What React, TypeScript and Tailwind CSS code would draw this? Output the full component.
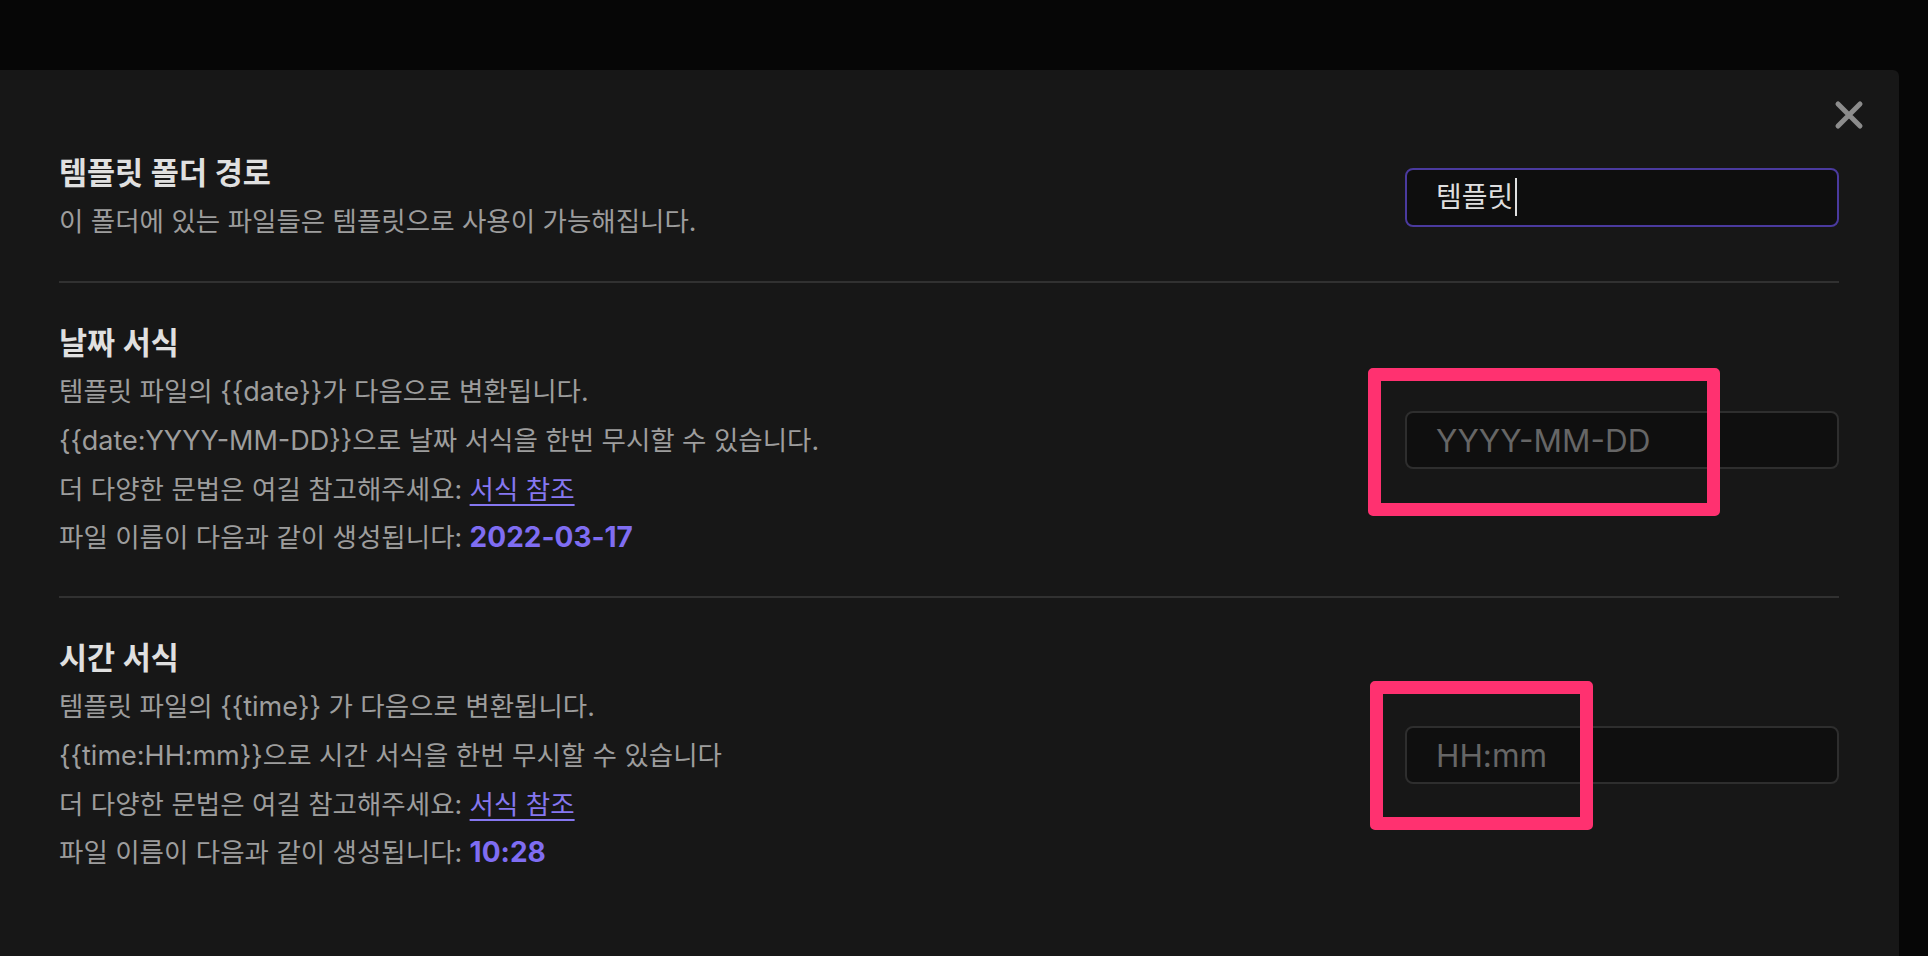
import type { ReactNode } from 'react';

const FONT = "font-['Inter','Noto_Sans_CJK_KR',sans-serif]";

function Code({ children }: { children: ReactNode }) {
  return <span className="text-[27px]">{children}</span>;
}

function Pop({ children }: { children: ReactNode }) {
  return <span className="text-[28px] font-bold text-[#7f6df2]">{children}</span>;
}

function DocLink({ children }: { children: ReactNode }) {
  return (
    <a href="#" className="text-[#8677f0] underline decoration-2 underline-offset-[5px]">
      {children}
    </a>
  );
}

interface SettingProps {
  name: string;
  lines: ReactNode[];
  control: ReactNode;
  first?: boolean;
}

function Setting({ name, lines, control, first }: SettingProps) {
  return (
    <div
      className={
        first
          ? 'flex items-center justify-between py-[36px]'
          : 'flex items-center justify-between pt-[36px] pb-[35px] border-t-2 border-[#313131]'
      }
    >
      <div className="flex-1 min-w-0">
        <div className="text-[30.5px] leading-[48px] font-semibold text-[#e0e0e0]">{name}</div>
        {lines.map((line, i) => (
          <div key={i} className="text-[26.5px] leading-[48px] text-[#9d9d9d] whitespace-nowrap">
            {line}
          </div>
        ))}
      </div>
      {control}
    </div>
  );
}

function TextBox({ placeholder }: { placeholder: string }) {
  return (
    <input
      type="text"
      placeholder={placeholder}
      className="w-[434px] h-[58px] shrink-0 rounded-[8px] border-2 border-[#2e2e2e] bg-[#0f0f0f] pl-[29px] text-[31.5px] text-[#dcdcdc] placeholder:text-[#666] outline-none"
    />
  );
}

export default function App() {
  return (
    <div className={`h-screen w-full overflow-hidden bg-[#060606] pt-[70px] ${FONT}`}>
      <div className="relative w-[1899px] h-[886px] rounded-tr-[6px] bg-[#171717] pt-[43px] pl-[59px] pr-[60px]">
        <button
          type="button"
          aria-label="Close"
          className="absolute top-[30px] right-[35px] text-[#8c8c8c]"
        >
          <svg width="30" height="30" viewBox="0 0 30 30" fill="none">
            <path d="M4 4 L26 26 M26 4 L4 26" stroke="currentColor" strokeWidth="5" strokeLinecap="round" />
          </svg>
        </button>

        <Setting
          first
          name="템플릿 폴더 경로"
          lines={['이 폴더에 있는 파일들은 템플릿으로 사용이 가능해집니다.']}
          control={
            <div className="w-[434px] h-[59px] shrink-0 rounded-[8px] border-2 border-[#4a3a9e] bg-[#0e0e0e] pl-[29px] flex items-center text-[28px] text-[#dedede]">
              <span>템플릿</span>
              <span className="ml-[2px] w-[2px] h-[38px] bg-[#e0e0e0]" />
            </div>
          }
        />

        <Setting
          name="날짜 서식"
          lines={[
            <>
              템플릿 파일의 <Code>{'{{date}}'}</Code>가 다음으로 변환됩니다.
            </>,
            <>
              <Code>{'{{date:YYYY-MM-DD}}'}</Code>으로 날짜 서식을 한번 무시할 수 있습니다.
            </>,
            <>
              더 다양한 문법은 여길 참고해주세요: <DocLink>서식 참조</DocLink>
            </>,
            <>
              파일 이름이 다음과 같이 생성됩니다: <Pop>2022-03-17</Pop>
            </>,
          ]}
          control={<TextBox placeholder="YYYY-MM-DD" />}
        />

        <Setting
          name="시간 서식"
          lines={[
            <>
              템플릿 파일의 <Code>{'{{time}}'}</Code> 가 다음으로 변환됩니다.
            </>,
            <>
              <Code>{'{{time:HH:mm}}'}</Code>으로 시간 서식을 한번 무시할 수 있습니다
            </>,
            <>
              더 다양한 문법은 여길 참고해주세요: <DocLink>서식 참조</DocLink>
            </>,
            <>
              파일 이름이 다음과 같이 생성됩니다: <Pop>10:28</Pop>
            </>,
          ]}
          control={<TextBox placeholder="HH:mm" />}
        />

        {/* annotation boxes */}
        <div className="absolute left-[1368px] top-[298px] w-[352px] h-[148px] rounded-[5px] border-[13px] border-[#ff3170]" />
        <div className="absolute left-[1370px] top-[611px] w-[223px] h-[149px] rounded-[5px] border-[13px] border-[#ff3170]" />
      </div>
    </div>
  );
}
